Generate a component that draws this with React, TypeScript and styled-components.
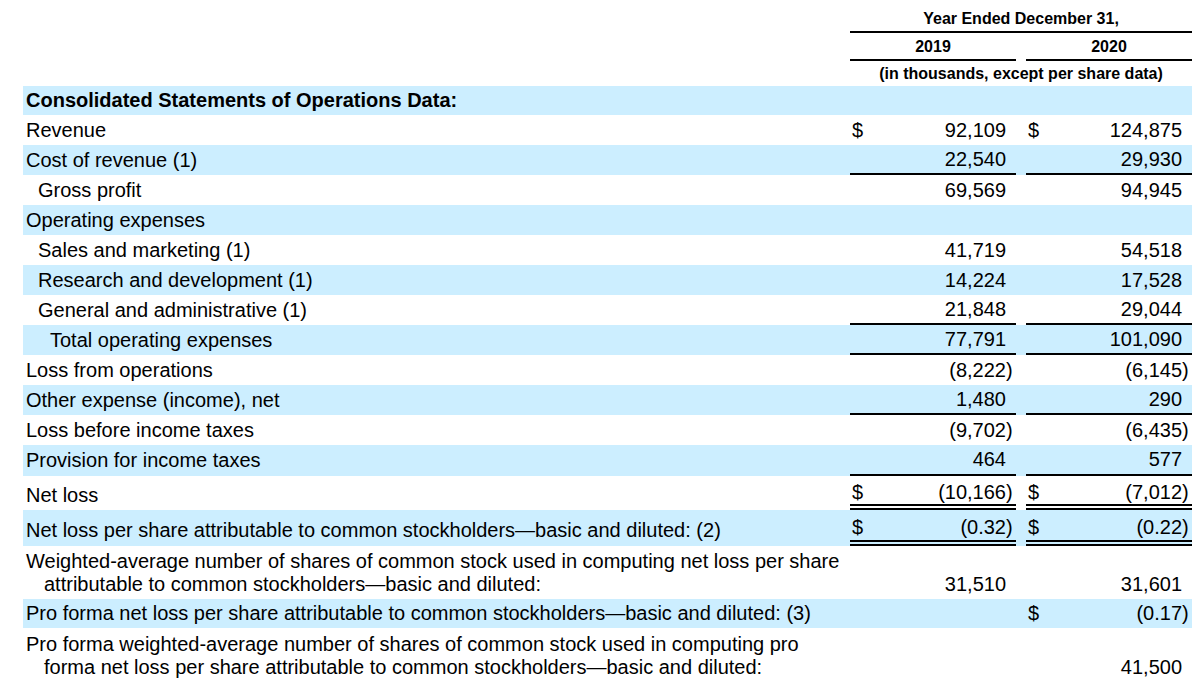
import React from "react";
import styled, { createGlobalStyle } from "styled-components";

const GlobalStyle = createGlobalStyle`
  html, body { margin: 0; padding: 0; background: #ffffff; }
  body { font-family: "Liberation Sans", Arial, sans-serif; color: #000; }
`;

const BAND = "#cceeff";

const Page = styled.div`
  padding: 0 0 0 23px;
  width: 1200px;
  box-sizing: border-box;
`;

const Table = styled.table`
  border-collapse: separate;
  border-spacing: 0;
  table-layout: fixed;
  width: 1169px;
  font-family: "Liberation Sans", Arial, sans-serif;
  font-size: 20px;
  color: #000;
`;

const HeadCell = styled.th<{ $h: number; $line?: boolean; $pt?: number }>`
  height: ${(p) => p.$h}px;
  padding: ${(p) => p.$pt || 0}px 0 0;
  font-size: 16px;
  font-weight: bold;
  text-align: center;
  vertical-align: middle;
  box-sizing: border-box;
  border-bottom: ${(p) => (p.$line ? "2px solid #000" : "none")};
`;

const Row = styled.tr<{ $band?: boolean }>`
  background: ${(p) => (p.$band ? BAND : "transparent")};
`;

const LabelCell = styled.td<{
  $indent: number;
  $h: number;
  $bold?: boolean;
  $wrap?: boolean;
  $valign?: string;
  $pt: number;
}>`
  height: ${(p) => p.$h}px;
  box-sizing: border-box;
  padding: ${(p) => (p.$wrap ? "1px 0 3px" : `${p.$pt}px 0 0`)} ${(p) => 3 + p.$indent * 12}px;
  font-weight: ${(p) => (p.$bold ? "bold" : "normal")};
  white-space: ${(p) => (p.$wrap ? "normal" : "nowrap")};
  vertical-align: ${(p) => p.$valign || "middle"};
  line-height: ${(p) => (p.$wrap ? "23px" : "normal")};
`;

const WrapText = styled.div`
  padding-left: 18px;
  text-indent: -18px;
`;

const ruleBorder = (rule?: string) =>
  rule === "single" ? "2px solid #000" : rule === "double" ? "6px double #000" : "none";

const CurCell = styled.td<{ $rule?: string; $valign?: string; $pt: number }>`
  padding: ${(p) => p.$pt}px 0 ${(p) => (p.$valign === "bottom" ? "3px" : "0")} 2px;
  box-sizing: border-box;
  text-align: left;
  vertical-align: ${(p) => p.$valign || "middle"};
  border-bottom: ${(p) => ruleBorder(p.$rule)};
`;

const ValCell = styled.td<{ $rule?: string; $valign?: string; $pt: number }>`
  padding: ${(p) => p.$pt}px 3px ${(p) => (p.$valign === "bottom" ? "3px" : "0")} 0;
  box-sizing: border-box;
  text-align: right;
  white-space: nowrap;
  vertical-align: ${(p) => p.$valign || "middle"};
  border-bottom: ${(p) => ruleBorder(p.$rule)};
`;

const Paren = styled.span`
  display: inline-block;
  width: 7px;
  text-align: left;
`;

const Gap = styled.td`
  padding: 0;
`;

type Cell = { cur?: boolean; v?: string };
type RowData = {
  label: string;
  indent?: number;
  band?: boolean;
  bold?: boolean;
  h: number;
  pt?: number;
  wrap?: boolean;
  rule?: string;
  a?: Cell;
  b?: Cell;
};

const rows: RowData[] = [
  { label: "Consolidated Statements of Operations Data:", band: true, bold: true, h: 29 },
  { label: "Revenue", h: 30, a: { cur: true, v: "92,109" }, b: { cur: true, v: "124,875" } },
  { label: "Cost of revenue (1)", band: true, h: 30, rule: "single", a: { v: "22,540" }, b: { v: "29,930" } },
  { label: "Gross profit", indent: 1, h: 30, a: { v: "69,569" }, b: { v: "94,945" } },
  { label: "Operating expenses", band: true, h: 30 },
  { label: "Sales and marketing (1)", indent: 1, h: 30, a: { v: "41,719" }, b: { v: "54,518" } },
  { label: "Research and development (1)", indent: 1, band: true, h: 30, a: { v: "14,224" }, b: { v: "17,528" } },
  { label: "General and administrative (1)", indent: 1, h: 30, rule: "single", a: { v: "21,848" }, b: { v: "29,044" } },
  { label: "Total operating expenses", indent: 2, band: true, h: 30, rule: "single", a: { v: "77,791" }, b: { v: "101,090" } },
  { label: "Loss from operations", h: 30, a: { v: "(8,222)" }, b: { v: "(6,145)" } },
  { label: "Other expense (income), net", band: true, h: 30, rule: "single", a: { v: "1,480" }, b: { v: "290" } },
  { label: "Loss before income taxes", h: 30, a: { v: "(9,702)" }, b: { v: "(6,435)" } },
  { label: "Provision for income taxes", band: true, h: 31, rule: "single", a: { v: "464" }, b: { v: "577" } },
  { label: "Net loss", h: 34, pt: 5, rule: "double", a: { cur: true, v: "(10,166)" }, b: { cur: true, v: "(7,012)" } },
  {
    label: "Net loss per share attributable to common stockholders—basic and diluted: (2)",
    band: true,
    h: 36,
    pt: 4,
    rule: "double",
    a: { cur: true, v: "(0.32)" },
    b: { cur: true, v: "(0.22)" },
  },
  {
    label:
      "Weighted-average number of shares of common stock used in computing net loss per share attributable to common stockholders—basic and diluted:",
    h: 53,
    wrap: true,
    a: { v: "31,510" },
    b: { v: "31,601" },
  },
  {
    label: "Pro forma net loss per share attributable to common stockholders—basic and diluted: (3)",
    band: true,
    h: 29,
    b: { cur: true, v: "(0.17)" },
  },
  {
    label:
      "Pro forma weighted-average number of shares of common stock used in computing pro forma net loss per share attributable to common stockholders—basic and diluted:",
    h: 54,
    wrap: true,
    b: { v: "41,500" },
  },
];

const Value: React.FC<{ v?: string }> = ({ v }) => {
  if (!v) return null;
  const neg = v.endsWith(")");
  return (
    <>
      {neg ? v.slice(0, -1) : v}
      <Paren>{neg ? ")" : ""}</Paren>
    </>
  );
};

export default function App() {
  return (
    <Page>
      <GlobalStyle />
      <Table>
        <colgroup>
          <col style={{ width: 827 }} />
          <col style={{ width: 24 }} />
          <col style={{ width: 142 }} />
          <col style={{ width: 10 }} />
          <col style={{ width: 24 }} />
          <col style={{ width: 142 }} />
        </colgroup>
        <thead>
          <tr>
            <HeadCell $h={33} />
            <HeadCell $h={33} $pt={6} colSpan={5} $line>
              Year Ended December 31,
            </HeadCell>
          </tr>
          <tr>
            <HeadCell $h={28} />
            <HeadCell $h={28} $pt={2} colSpan={2} $line>
              2019
            </HeadCell>
            <HeadCell $h={28} />
            <HeadCell $h={28} $pt={2} colSpan={2} $line>
              2020
            </HeadCell>
          </tr>
          <tr>
            <HeadCell $h={25} />
            <HeadCell $h={25} colSpan={5}>
              (in thousands, except per share data)
            </HeadCell>
          </tr>
        </thead>
        <tbody>
          {rows.map((r, i) => {
            const valign = r.wrap ? "bottom" : "middle";
            const pt = r.pt || 0;
            return (
              <Row key={i} $band={r.band}>
                <LabelCell
                  $indent={r.indent || 0}
                  $h={r.h}
                  $pt={pt}
                  $bold={r.bold}
                  $wrap={r.wrap}
                  $valign={valign}
                >
                  {r.wrap ? <WrapText>{r.label}</WrapText> : r.label}
                </LabelCell>
                <CurCell $pt={pt} $rule={r.a ? r.rule : undefined} $valign={valign}>
                  {r.a?.cur ? "$" : ""}
                </CurCell>
                <ValCell $pt={pt} $rule={r.a ? r.rule : undefined} $valign={valign}>
                  <Value v={r.a?.v} />
                </ValCell>
                <Gap />
                <CurCell $pt={pt} $rule={r.b ? r.rule : undefined} $valign={valign}>
                  {r.b?.cur ? "$" : ""}
                </CurCell>
                <ValCell $pt={pt} $rule={r.b ? r.rule : undefined} $valign={valign}>
                  <Value v={r.b?.v} />
                </ValCell>
              </Row>
            );
          })}
        </tbody>
      </Table>
    </Page>
  );
}
